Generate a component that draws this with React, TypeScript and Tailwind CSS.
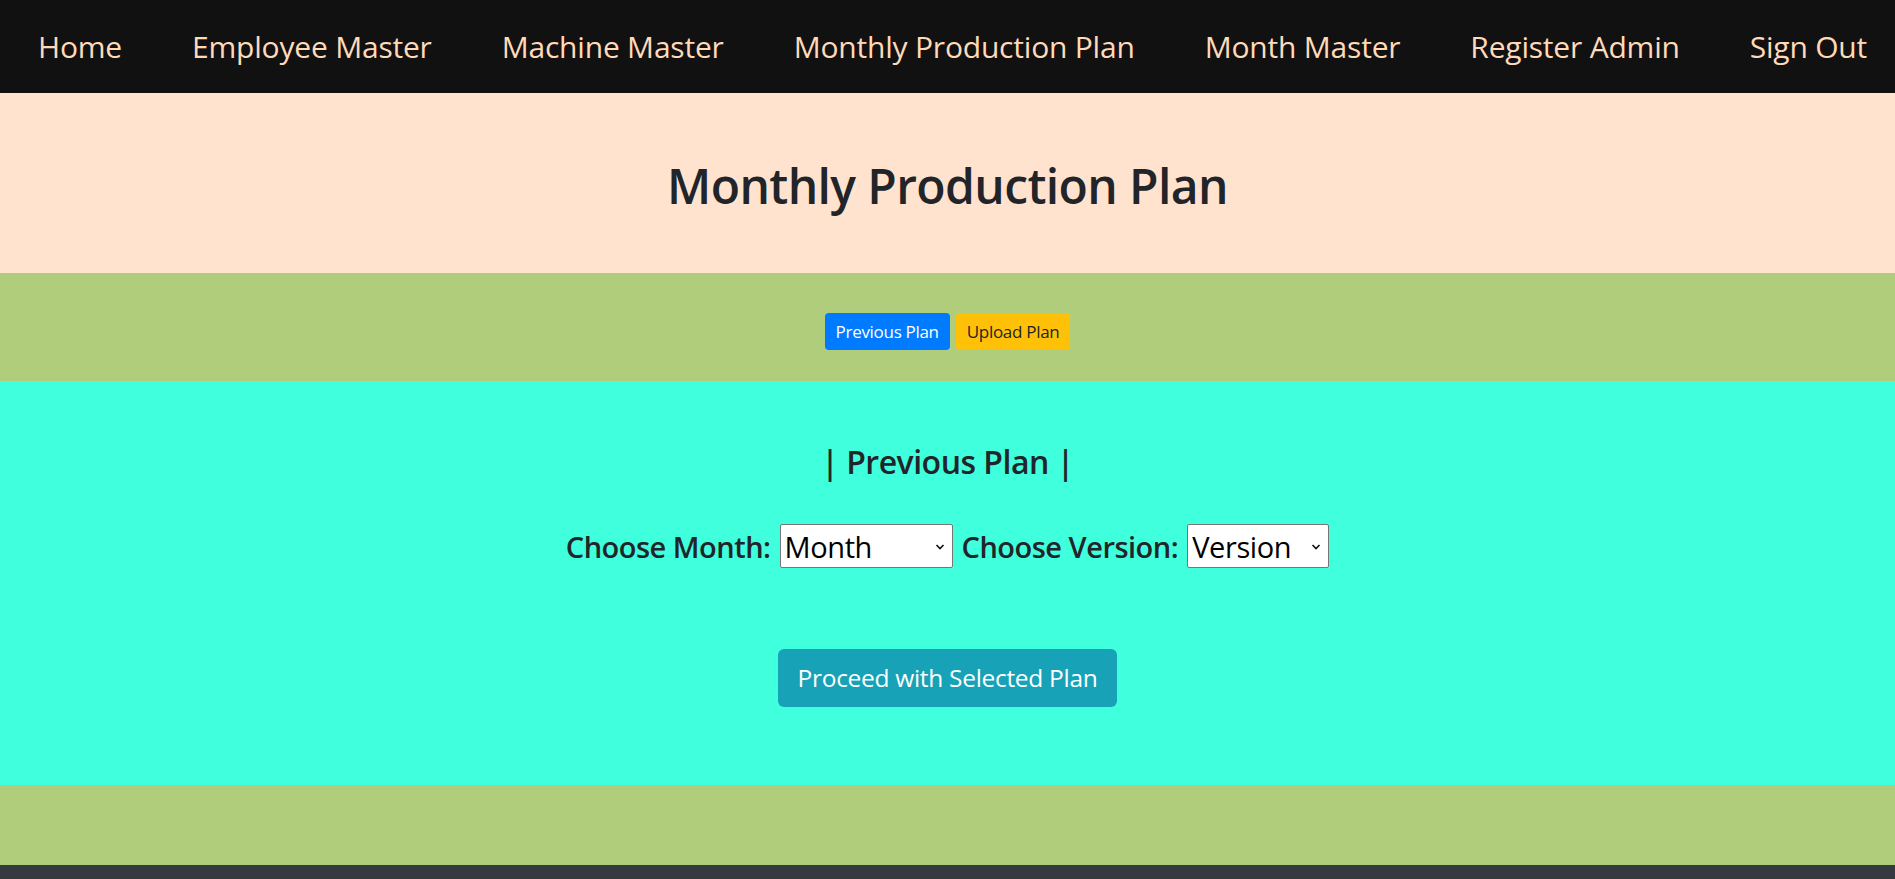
import React from 'react';

const font = { fontFamily: '"Open Sans", "Noto Sans", sans-serif' };

const Chevron: React.FC = () => (
  <svg
    className="pointer-events-none absolute right-[8px] top-1/2 -translate-y-1/2"
    width="10"
    height="7"
    viewBox="0 0 10 7"
    fill="none"
  >
    <path d="M1.5 1.5L5 5L8.5 1.5" stroke="#111" strokeWidth="1.6" />
  </svg>
);

const App: React.FC = () => {
  const links = [
    'Home',
    'Employee Master',
    'Machine Master',
    'Monthly Production Plan',
    'Month Master',
    'Register Admin',
    'Sign Out'
  ];

  return (
    <div className="min-h-screen bg-[#343a40] font-['Open_Sans',sans-serif]">
      {/* Navbar */}
      <nav className="flex h-[93px] items-center gap-[70px] bg-[#111111] pl-[38px]">
        {links.map((link) => (
          <a
            key={link}
            href="#"
            className="text-[30px] tracking-[-0.2px] text-[#ffdab9] no-underline"
          >
            {link}
          </a>
        ))}
      </nav>

      {/* Title */}
      <header className="flex h-[180px] justify-center bg-[#ffe3ce] pt-[64px]">
        <h1 className="text-[48px] font-semibold leading-[1.2] tracking-[-0.6px] text-[#212529]">
          Monthly Production Plan
        </h1>
      </header>

      {/* Plan switcher */}
      <div className="flex h-[108px] justify-center gap-[6px] bg-[#b0cd7c] pt-[40px]">
        <button className="h-[37px] rounded-[4px] bg-[#007bff] px-[11px] text-[17px] tracking-[-0.3px] text-white">
          Previous Plan
        </button>
        <button className="h-[37px] rounded-[4px] bg-[#ffc107] px-[11px] text-[17px] tracking-[-0.3px] text-[#212529]">
          Upload Plan
        </button>
      </div>

      {/* Previous plan form */}
      <section className="flex h-[404px] flex-col items-center bg-[#40ffdc] pt-[62px] text-[#212529]">
        <h3 className="text-[32px] font-semibold leading-[1.2] tracking-[-0.5px]">| Previous Plan |</h3>
        <div className="mt-[43px] flex items-center gap-[9px] text-[29px] font-semibold tracking-[-0.5px]">
          <span>Choose Month:</span>
          <div className="relative">
            <select
              style={font}
              className="h-[44px] w-[173px] appearance-none rounded-[2px] border border-[#767676] bg-white pl-[4px] text-[29px] font-normal tracking-[-0.4px] text-black"
              defaultValue="Month"
            >
              <option>Month</option>
            </select>
            <Chevron />
          </div>
          <span>Choose Version:</span>
          <div className="relative">
            <select
              style={font}
              className="h-[44px] w-[142px] appearance-none rounded-[2px] border border-[#767676] bg-white pl-[4px] text-[29px] font-normal tracking-[-0.4px] text-black"
              defaultValue="Version"
            >
              <option>Version</option>
            </select>
            <Chevron />
          </div>
        </div>
        <button className="mt-[80px] h-[58px] rounded-[6px] bg-[#17a2b8] px-[20px] text-[24.5px] tracking-[-0.3px] text-white">
          Proceed with Selected Plan
        </button>
      </section>

      {/* Bottom band */}
      <div className="h-[80px] bg-[#b0cd7c]" />
    </div>
  );
};

export default App;
